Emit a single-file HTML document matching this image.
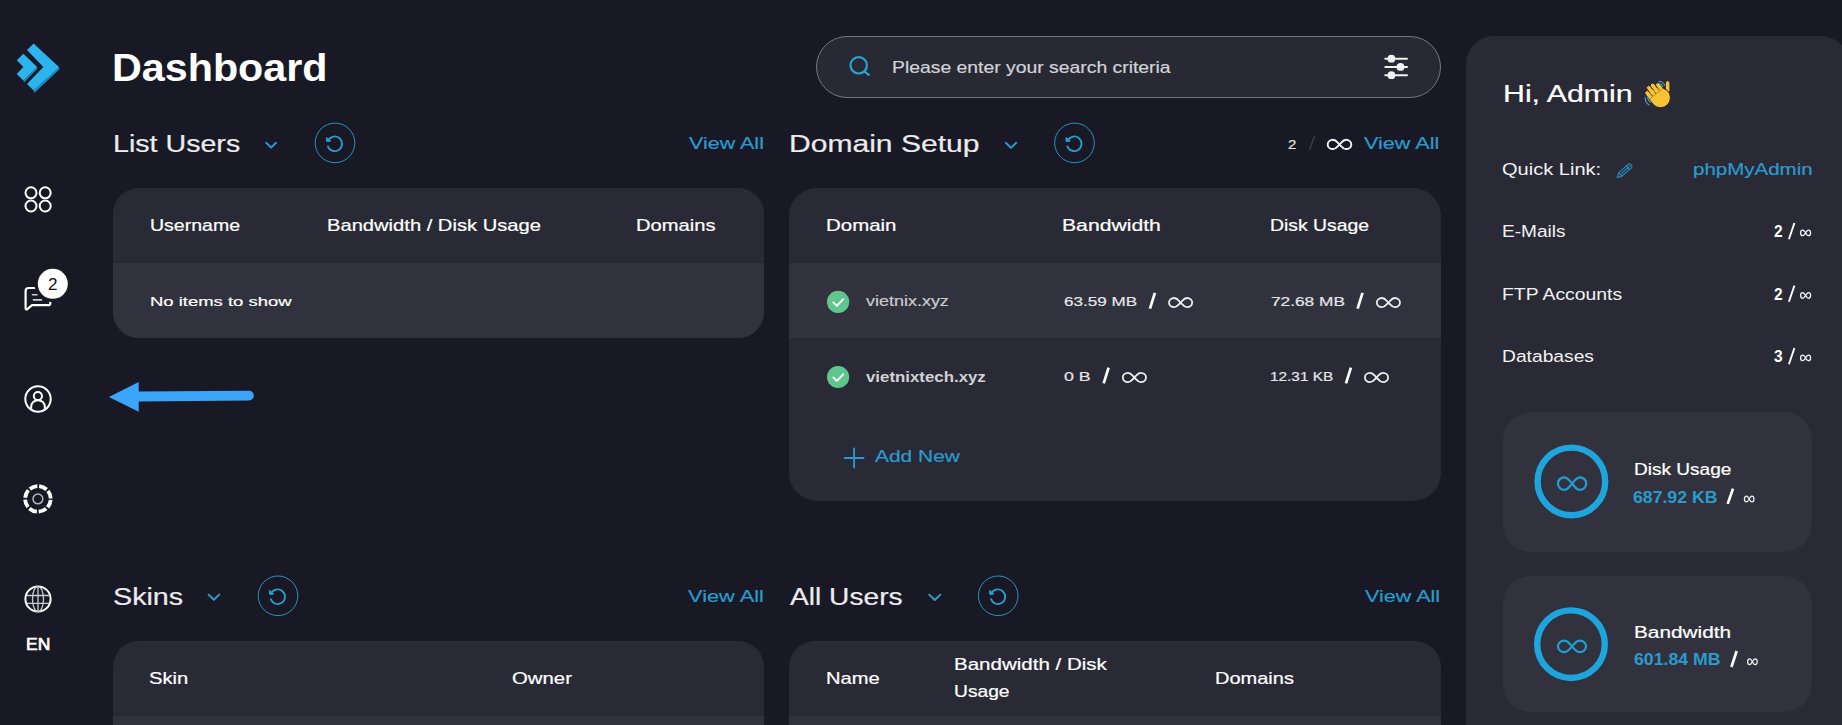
<!DOCTYPE html>
<html lang="en">
<head>
<meta charset="utf-8">
<title>Dashboard</title>
<style>
html,body{margin:0;padding:0;}
body{width:1842px;height:725px;overflow:hidden;background:#181924;position:relative;font-family:"Liberation Sans",sans-serif;}
.t{position:absolute;white-space:nowrap;line-height:normal;transform-origin:0 0;font-family:"Liberation Sans",sans-serif;}
.box{position:absolute;overflow:hidden;}
.box>i{position:absolute;left:0;right:0;display:block;}
#icons{position:absolute;left:0;top:0;width:1842px;height:725px;}
</style>
</head>
<body>
<!-- cards -->
<div class="box" style="left:113px;top:188px;width:651px;height:150px;border-radius:26px;background:#292a35;"><i style="top:73.4px;height:1.2px;background:#262732;"></i><i style="top:74.5px;height:75.5px;background:#31323d;"></i></div>
<div class="box" style="left:789px;top:188px;width:652px;height:312.6px;border-radius:28px;background:#292a35;"><i style="top:73.4px;height:1.2px;background:#262732;"></i><i style="top:74.5px;height:75.5px;background:#31323d;"></i></div>
<div class="box" style="left:113px;top:640.5px;width:651px;height:150px;border-radius:26px;background:#292a35;"><i style="top:74.2px;height:1.2px;background:#262732;"></i><i style="top:75.3px;height:76px;background:#31323d;"></i></div>
<div class="box" style="left:789px;top:640.5px;width:652px;height:150px;border-radius:26px;background:#292a35;"><i style="top:74.2px;height:1.2px;background:#262732;"></i><i style="top:75.3px;height:76px;background:#31323d;"></i></div>
<!-- search -->
<div class="box" style="left:816px;top:36px;width:623px;height:60px;border-radius:31px;background:#282934;border:1px solid #74767f;"></div>
<!-- right panel -->
<div class="box" style="left:1466px;top:36px;width:383px;height:760px;border-radius:28px;background:#292a35;"></div>
<div class="box" style="left:1503.4px;top:412.2px;width:309px;height:140.2px;border-radius:28px;background:#31323d;"></div>
<div class="box" style="left:1503.4px;top:575.9px;width:309px;height:136.1px;border-radius:28px;background:#31323d;"></div>

<svg id="icons" viewBox="0 0 1842 725" width="1842" height="725">
<!-- logo -->
<g>
<polygon points="59.2,67.2 59.2,69.6 34.6,92.8 33.6,90.4" fill="#1a8cc2"/>
<polygon points="33.6,43.5 59.2,67.2 33.6,90.4 27,84.1 43.3,67 27,50.1" fill="#2cb4ee"/>
<polygon points="37.1,66.9 37.1,69 24,82.6 23.4,80.6" fill="#1a8cc2"/>
<polygon points="23.4,53.7 37.1,66.9 23.4,80.6 16.8,74 23.4,67 16.8,60.3" fill="#2cb4ee"/>
</g>
<!-- grid -->
<g fill="none" stroke="#fff" stroke-width="2">
<circle cx="31" cy="192.8" r="5.5"/><circle cx="45.2" cy="192.8" r="5.5"/><circle cx="31" cy="206" r="5.5"/><circle cx="45.2" cy="206" r="5.5"/>
</g>
<!-- chat -->
<g fill="none" stroke="#fff" stroke-width="2.2" stroke-linejoin="round" stroke-linecap="round">
<path d="M50.3,300 V303.2 Q50.3,305.2 48.3,305.2 H32 L27.5,309 Q25.6,310.2 25.6,308 V291 Q25.6,288 28.6,288 H38"/>
<path d="M32.5,294.8 H37" stroke="#cfd0d5" stroke-width="1.6"/><path d="M33.4,299.9 H41.4" stroke="#cfd0d5" stroke-width="1.6"/>
</g>
<circle cx="52.8" cy="283.8" r="18.4" fill="#181924"/>
<circle cx="52.8" cy="283.8" r="15" fill="#fff"/>
<!-- user -->
<g fill="none" stroke="#fff" stroke-width="2">
<circle cx="38" cy="399" r="12.7"/>
<circle cx="37.9" cy="396" r="4.1"/>
<path d="M31.2,409.6 V406.5 A6.8,6.3 0 0 1 44.8,406.5 V409.6"/>
</g>
<!-- gear -->
<circle cx="37.9" cy="498.9" r="12.8" fill="none" stroke="#fff" stroke-width="3.8" stroke-dasharray="8.15 1.903" stroke-dashoffset="-0.95"/>
<circle cx="37.9" cy="498.9" r="4.9" fill="none" stroke="#b6b7be" stroke-width="1.5"/>
<!-- globe -->
<g fill="none" stroke="#fff">
<circle cx="38" cy="599" r="12.6" stroke-width="2"/>
<g stroke="#c9cad0" stroke-width="1.3">
<ellipse cx="38" cy="599" rx="5.5" ry="12.6"/>
<path d="M38,586.4 V611.6 M26.5,595.5 H49.5 M26.5,603.3 H49.5"/>
</g>
</g>
<!-- arrow -->
<path d="M108.9,397.1 L138.7,381.9 L138.7,391.6 L249,390.7 A4.9,4.9 0 0 1 249,400.5 L138.7,401.6 L138.7,411.7 Z" fill="#3ba5fa"/>
<!-- chevrons -->
<g fill="none" stroke="#2b9bcd" stroke-width="2" stroke-linecap="round" stroke-linejoin="round">
<polyline points="266.2,142.8 271.1,147.6 276,142.8"/>
<polyline points="1005.8,142.8 1011,147.9 1016.2,142.8"/>
<polyline points="208.6,594.6 213.9,599.8 219.2,594.6"/>
<polyline points="929.2,594.6 934.8,600 940.4,594.6"/>
</g>
<!-- refresh buttons -->

<g transform="translate(335,142.9)" fill="none" stroke="#2b9bcd">
<circle cx="0" cy="0" r="19.8" stroke-width="1" stroke-opacity="0.92"/>
<path d="M-6.86,-2.5 A7.3,7.3 0 1 1 -7.05,1.9" stroke-width="1.8" transform="translate(-0.3,0.9)"/>
<path d="M-8.6,-5.4 L-8.4,-1.4 L-4.2,-1.8 Z" fill="#2b9bcd" stroke-width="1" stroke-linejoin="round"/>
</g>
<g transform="translate(1074.5,142.9)" fill="none" stroke="#2b9bcd">
<circle cx="0" cy="0" r="19.8" stroke-width="1" stroke-opacity="0.92"/>
<path d="M-6.86,-2.5 A7.3,7.3 0 1 1 -7.05,1.9" stroke-width="1.8" transform="translate(-0.3,0.9)"/>
<path d="M-8.6,-5.4 L-8.4,-1.4 L-4.2,-1.8 Z" fill="#2b9bcd" stroke-width="1" stroke-linejoin="round"/>
</g>
<g transform="translate(278,595.8)" fill="none" stroke="#2b9bcd">
<circle cx="0" cy="0" r="19.8" stroke-width="1" stroke-opacity="0.92"/>
<path d="M-6.86,-2.5 A7.3,7.3 0 1 1 -7.05,1.9" stroke-width="1.8" transform="translate(-0.3,0.9)"/>
<path d="M-8.6,-5.4 L-8.4,-1.4 L-4.2,-1.8 Z" fill="#2b9bcd" stroke-width="1" stroke-linejoin="round"/>
</g>
<g transform="translate(998.2,595.8)" fill="none" stroke="#2b9bcd">
<circle cx="0" cy="0" r="19.8" stroke-width="1" stroke-opacity="0.92"/>
<path d="M-6.86,-2.5 A7.3,7.3 0 1 1 -7.05,1.9" stroke-width="1.8" transform="translate(-0.3,0.9)"/>
<path d="M-8.6,-5.4 L-8.4,-1.4 L-4.2,-1.8 Z" fill="#2b9bcd" stroke-width="1" stroke-linejoin="round"/>
</g>
<!-- search icon -->
<g fill="none" stroke="#2aa2d2" stroke-width="2.2" stroke-linecap="round">
<circle cx="858.7" cy="65.3" r="8.2"/><path d="M864.6,71.6 L868.8,74.8"/>
</g>
<!-- sliders -->
<g stroke="#f1f1f4" stroke-width="2" stroke-linecap="round">
<path d="M1385.3,58.7 H1407 M1385.3,66.9 H1407 M1385.3,75.2 H1407"/>
</g>
<g fill="#f1f1f4"><circle cx="1391.4" cy="58.7" r="3.9"/><circle cx="1400.5" cy="66.9" r="3.9"/><circle cx="1391.4" cy="75.2" r="3.9"/></g>
<!-- dim slash + header inf -->
<path d="M1309.4,150.2 L1314.6,136" stroke="#3c3e4a" stroke-width="1.4"/>
<!-- check circles -->
<g>
<circle cx="838.1" cy="301.9" r="11.1" fill="#5fc78d"/>
<polyline points="833.3,302.4 836.9,305.8 843.2,299.2" fill="none" stroke="#fff" stroke-width="1.9" stroke-linecap="round" stroke-linejoin="round"/>
<circle cx="838.1" cy="377" r="11.1" fill="#5fc78d"/>
<polyline points="833.3,377.5 836.9,380.9 843.2,374.3" fill="none" stroke="#fff" stroke-width="1.9" stroke-linecap="round" stroke-linejoin="round"/>
</g>
<!-- bold slashes -->
<g stroke="#fff" stroke-width="2.7">
<path d="M1150,308.7 L1154.9,292.8"/><path d="M1357.6,308.7 L1362.5,292.8"/>
<path d="M1103.7,383.4 L1108.6,367.7"/><path d="M1346,383.4 L1350.9,367.7"/>
<path d="M1727.7,503.9 L1733,488.6"/><path d="M1731.4,667 L1736.7,651"/>
</g>
<!-- thin slashes right panel -->
<g stroke="#fff" stroke-width="1.9">
<path d="M1788.9,239.2 L1794.4,223"/><path d="M1788.9,301.8 L1794.4,285.6"/><path d="M1788.9,364.2 L1794.4,348"/>
</g>
<!-- plus -->
<path d="M854.1,448.5 V467.6 M844.6,458 H863.6" stroke="#2b9bcd" stroke-width="1.8" stroke-linecap="round"/>
<!-- rings -->
<circle cx="1571.4" cy="481.4" r="33.8" fill="none" stroke="#1ea5de" stroke-width="6.4"/>
<circle cx="1571" cy="644.2" r="33.8" fill="none" stroke="#1ea5de" stroke-width="6.4"/>
<!-- pencil -->
<g fill="none" stroke="#2788b8" stroke-width="1.2" stroke-linejoin="round" stroke-linecap="round">
<path d="M1617.2,177.4 L1618.6,172.9 L1628.2,164.3 Q1629.6,163.2 1630.8,164.5 L1631.5,165.3 Q1632.6,166.7 1631.3,167.9 L1621.7,176.3 Z"/>
<path d="M1618.6,172.9 L1621.7,176.3 M1626.2,166.1 L1629.4,169.5 M1620.2,174.6 L1629.8,166"/>
</g>
<!-- wave emoji -->
<g transform="translate(1657.2,94.6)">
<g transform="rotate(-38)" stroke="#2a2520" stroke-width="0.9" stroke-linejoin="round">
<rect x="8.6" y="-6.5" width="4.6" height="12" rx="2.3" fill="#f7c235" transform="rotate(38 10.9 3)"/>
<rect x="-9.2" y="-9.8" width="4.5" height="14" rx="2.25" fill="#f7c235"/>
<rect x="-4.7" y="-12.8" width="4.5" height="16" rx="2.25" fill="#f7c235"/>
<rect x="-0.2" y="-12.4" width="4.5" height="16" rx="2.25" fill="#f7c235"/>
<rect x="4.3" y="-9.4" width="4.4" height="13" rx="2.2" fill="#f7c235"/>
<path d="M-9.2,-1 H8.7 L10.5,3 A9.6,9.6 0 0 1 -9.2,6 Z" fill="#f7c235"/>
<path d="M-8.7,-1.2 H8.2 V2 H-8.7 Z" fill="#f7c235" stroke="none"/>
<path d="M-4.7,-1 V-6 M-0.2,-1 V-7 M4.3,-1 V-5" stroke="#dba324" stroke-width="0.8" fill="none"/>
</g>
<path d="M-12,2.6 Q-12.4,7.4 -8.2,10.4 M-9.4,2.4 Q-9.6,5.6 -6.6,7.8" fill="none" stroke="#4c9fd0" stroke-width="1.1" stroke-linecap="round"/>
<path d="M1.6,-13.4 Q6,-13.2 7.6,-9.2 M2,-10.8 Q4.6,-10.6 5.6,-8.2" fill="none" stroke="#4c9fd0" stroke-width="1.1" stroke-linecap="round"/>
</g>
<path d="M1339.50,144.40 C1341.86,142.08 1343.04,139.75 1345.99,139.75 C1348.94,139.75 1351.30,141.84 1351.30,144.40 C1351.30,146.96 1348.94,149.05 1345.99,149.05 C1343.04,149.05 1341.86,146.72 1339.50,144.40 C1337.14,142.08 1335.96,139.75 1333.01,139.75 C1330.06,139.75 1327.70,141.84 1327.70,144.40 C1327.70,146.96 1330.06,149.05 1333.01,149.05 C1335.96,149.05 1337.14,146.72 1339.50,144.40Z" fill="none" stroke="#f4f4f6" stroke-width="1.9" stroke-linejoin="round"/>
<path d="M1180.60,302.60 C1182.92,300.30 1184.08,298.00 1186.98,298.00 C1189.88,298.00 1192.20,300.07 1192.20,302.60 C1192.20,305.13 1189.88,307.20 1186.98,307.20 C1184.08,307.20 1182.92,304.90 1180.60,302.60 C1178.28,300.30 1177.12,298.00 1174.22,298.00 C1171.32,298.00 1169.00,300.07 1169.00,302.60 C1169.00,305.13 1171.32,307.20 1174.22,307.20 C1177.12,307.20 1178.28,304.90 1180.60,302.60Z" fill="none" stroke="#f0f0f3" stroke-width="1.8" stroke-linejoin="round"/>
<path d="M1388.40,302.60 C1390.72,300.30 1391.88,298.00 1394.78,298.00 C1397.68,298.00 1400.00,300.07 1400.00,302.60 C1400.00,305.13 1397.68,307.20 1394.78,307.20 C1391.88,307.20 1390.72,304.90 1388.40,302.60 C1386.08,300.30 1384.92,298.00 1382.02,298.00 C1379.12,298.00 1376.80,300.07 1376.80,302.60 C1376.80,305.13 1379.12,307.20 1382.02,307.20 C1384.92,307.20 1386.08,304.90 1388.40,302.60Z" fill="none" stroke="#f0f0f3" stroke-width="1.8" stroke-linejoin="round"/>
<path d="M1134.40,377.50 C1136.72,375.20 1137.88,372.90 1140.78,372.90 C1143.68,372.90 1146.00,374.97 1146.00,377.50 C1146.00,380.03 1143.68,382.10 1140.78,382.10 C1137.88,382.10 1136.72,379.80 1134.40,377.50 C1132.08,375.20 1130.92,372.90 1128.02,372.90 C1125.12,372.90 1122.80,374.97 1122.80,377.50 C1122.80,380.03 1125.12,382.10 1128.02,382.10 C1130.92,382.10 1132.08,379.80 1134.40,377.50Z" fill="none" stroke="#f0f0f3" stroke-width="1.8" stroke-linejoin="round"/>
<path d="M1376.50,377.50 C1378.82,375.20 1379.98,372.90 1382.88,372.90 C1385.78,372.90 1388.10,374.97 1388.10,377.50 C1388.10,380.03 1385.78,382.10 1382.88,382.10 C1379.98,382.10 1378.82,379.80 1376.50,377.50 C1374.18,375.20 1373.02,372.90 1370.12,372.90 C1367.22,372.90 1364.90,374.97 1364.90,377.50 C1364.90,380.03 1367.22,382.10 1370.12,382.10 C1373.02,382.10 1374.18,379.80 1376.50,377.50Z" fill="none" stroke="#f0f0f3" stroke-width="1.8" stroke-linejoin="round"/>
<path d="M1572.10,483.60 C1574.93,480.45 1576.34,477.30 1579.88,477.30 C1583.42,477.30 1586.25,480.14 1586.25,483.60 C1586.25,487.06 1583.42,489.90 1579.88,489.90 C1576.34,489.90 1574.93,486.75 1572.10,483.60 C1569.27,480.45 1567.86,477.30 1564.32,477.30 C1560.78,477.30 1557.95,480.14 1557.95,483.60 C1557.95,487.06 1560.78,489.90 1564.32,489.90 C1567.86,489.90 1569.27,486.75 1572.10,483.60Z" fill="none" stroke="#1f9fd6" stroke-width="2.2" stroke-linejoin="round"/>
<path d="M1572.00,646.40 C1574.80,643.50 1576.20,640.60 1579.70,640.60 C1583.20,640.60 1586.00,643.21 1586.00,646.40 C1586.00,649.59 1583.20,652.20 1579.70,652.20 C1576.20,652.20 1574.80,649.30 1572.00,646.40 C1569.20,643.50 1567.80,640.60 1564.30,640.60 C1560.80,640.60 1558.00,643.21 1558.00,646.40 C1558.00,649.59 1560.80,652.20 1564.30,652.20 C1567.80,652.20 1569.20,649.30 1572.00,646.40Z" fill="none" stroke="#1f9fd6" stroke-width="2.2" stroke-linejoin="round"/>
<path d="M1805.60,232.90 C1806.61,231.51 1807.11,230.12 1808.36,230.12 C1809.62,230.12 1810.62,231.37 1810.62,232.90 C1810.62,234.43 1809.62,235.68 1808.36,235.68 C1807.11,235.68 1806.61,234.29 1805.60,232.90 C1804.59,231.51 1804.09,230.12 1802.84,230.12 C1801.58,230.12 1800.57,231.37 1800.57,232.90 C1800.57,234.43 1801.58,235.68 1802.84,235.68 C1804.09,235.68 1804.59,234.29 1805.60,232.90Z" fill="none" stroke="#f4f4f6" stroke-width="1.25" stroke-linejoin="round"/>
<path d="M1805.60,295.50 C1806.61,294.11 1807.11,292.73 1808.36,292.73 C1809.62,292.73 1810.62,293.97 1810.62,295.50 C1810.62,297.03 1809.62,298.27 1808.36,298.27 C1807.11,298.27 1806.61,296.89 1805.60,295.50 C1804.59,294.11 1804.09,292.73 1802.84,292.73 C1801.58,292.73 1800.57,293.97 1800.57,295.50 C1800.57,297.03 1801.58,298.27 1802.84,298.27 C1804.09,298.27 1804.59,296.89 1805.60,295.50Z" fill="none" stroke="#f4f4f6" stroke-width="1.25" stroke-linejoin="round"/>
<path d="M1805.60,357.90 C1806.61,356.51 1807.11,355.12 1808.36,355.12 C1809.62,355.12 1810.62,356.37 1810.62,357.90 C1810.62,359.43 1809.62,360.67 1808.36,360.67 C1807.11,360.67 1806.61,359.29 1805.60,357.90 C1804.59,356.51 1804.09,355.12 1802.84,355.12 C1801.58,355.12 1800.57,356.37 1800.57,357.90 C1800.57,359.43 1801.58,360.67 1802.84,360.67 C1804.09,360.67 1804.59,359.29 1805.60,357.90Z" fill="none" stroke="#f4f4f6" stroke-width="1.25" stroke-linejoin="round"/>
<path d="M1749.20,499.00 C1750.15,497.56 1750.63,496.12 1751.83,496.12 C1753.02,496.12 1753.98,497.42 1753.98,499.00 C1753.98,500.58 1753.02,501.88 1751.83,501.88 C1750.63,501.88 1750.15,500.44 1749.20,499.00 C1748.25,497.56 1747.77,496.12 1746.57,496.12 C1745.38,496.12 1744.42,497.42 1744.42,499.00 C1744.42,500.58 1745.38,501.88 1746.57,501.88 C1747.77,501.88 1748.25,500.44 1749.20,499.00Z" fill="none" stroke="#f4f4f6" stroke-width="1.25" stroke-linejoin="round"/>
<path d="M1752.40,661.70 C1753.36,660.26 1753.83,658.83 1755.03,658.83 C1756.22,658.83 1757.18,660.12 1757.18,661.70 C1757.18,663.28 1756.22,664.58 1755.03,664.58 C1753.83,664.58 1753.36,663.14 1752.40,661.70 C1751.45,660.26 1750.97,658.83 1749.77,658.83 C1748.58,658.83 1747.62,660.12 1747.62,661.70 C1747.62,663.28 1748.58,664.58 1749.77,664.58 C1750.97,664.58 1751.45,663.14 1752.40,661.70Z" fill="none" stroke="#f4f4f6" stroke-width="1.25" stroke-linejoin="round"/>
</svg>
<div class="t" style="left:112.22px;top:46.20px;font-size:38.9px;font-weight:700;color:#ffffff;transform:scaleX(1.0611);">Dashboard</div>
<div class="t" style="left:112.68px;top:130.00px;font-size:24.7px;font-weight:400;color:#ececef;transform:scaleX(1.1589);-webkit-text-stroke:0.2px #ececef;">List Users</div>
<div class="t" style="left:688.70px;top:134.20px;font-size:16.5px;font-weight:400;color:#2b9bcd;transform:scaleX(1.3035);-webkit-text-stroke:0.2px #2b9bcd;">View All</div>
<div class="t" style="left:788.76px;top:130.00px;font-size:24.7px;font-weight:400;color:#ececef;transform:scaleX(1.2175);-webkit-text-stroke:0.2px #ececef;">Domain Setup</div>
<div class="t" style="left:1287.50px;top:136.90px;font-size:13.1px;font-weight:400;color:#e4e4e8;transform:scaleX(1.1429);-webkit-text-stroke:0.2px #e4e4e8;">2</div>
<div class="t" style="left:1364.20px;top:133.90px;font-size:16.5px;font-weight:400;color:#2b9bcd;transform:scaleX(1.3105);-webkit-text-stroke:0.2px #2b9bcd;">View All</div>
<div class="t" style="left:150.35px;top:216.90px;font-size:15.7px;font-weight:400;color:#ffffff;transform:scaleX(1.2451);-webkit-text-stroke:0.2px #ffffff;">Username</div>
<div class="t" style="left:327.22px;top:216.90px;font-size:15.7px;font-weight:400;color:#ffffff;transform:scaleX(1.2842);-webkit-text-stroke:0.2px #ffffff;">Bandwidth / Disk Usage</div>
<div class="t" style="left:635.71px;top:216.90px;font-size:15.7px;font-weight:400;color:#ffffff;transform:scaleX(1.2852);-webkit-text-stroke:0.2px #ffffff;">Domains</div>
<div class="t" style="left:149.65px;top:294.20px;font-size:13.7px;font-weight:400;color:#ffffff;transform:scaleX(1.3481);-webkit-text-stroke:0.2px #ffffff;">No items to show</div>
<div class="t" style="left:826.30px;top:217.10px;font-size:15.7px;font-weight:400;color:#ffffff;transform:scaleX(1.3038);-webkit-text-stroke:0.2px #ffffff;">Domain</div>
<div class="t" style="left:1062.45px;top:217.10px;font-size:15.7px;font-weight:400;color:#ffffff;transform:scaleX(1.3486);-webkit-text-stroke:0.2px #ffffff;">Bandwidth</div>
<div class="t" style="left:1269.86px;top:217.10px;font-size:15.7px;font-weight:400;color:#ffffff;transform:scaleX(1.2354);-webkit-text-stroke:0.2px #ffffff;">Disk Usage</div>
<div class="t" style="left:866.30px;top:293.10px;font-size:14.5px;font-weight:400;color:#c9cace;transform:scaleX(1.2388);-webkit-text-stroke:0.2px #c9cace;">vietnix.xyz</div>
<div class="t" style="left:1063.90px;top:293.80px;font-size:13.7px;font-weight:400;color:#e6e6ea;transform:scaleX(1.2466);-webkit-text-stroke:0.2px #e6e6ea;">63.59 MB</div>
<div class="t" style="left:1270.80px;top:293.80px;font-size:13.7px;font-weight:400;color:#e6e6ea;transform:scaleX(1.2621);-webkit-text-stroke:0.2px #e6e6ea;">72.68 MB</div>
<div class="t" style="left:866.30px;top:368.70px;font-size:14.5px;font-weight:700;color:#d2d3d6;transform:scaleX(1.1612);">vietnixtech.xyz</div>
<div class="t" style="left:1063.90px;top:369.20px;font-size:13.7px;font-weight:400;color:#e6e6ea;transform:scaleX(1.3000);-webkit-text-stroke:0.2px #e6e6ea;">0 B</div>
<div class="t" style="left:1269.68px;top:369.20px;font-size:13.7px;font-weight:400;color:#e6e6ea;transform:scaleX(1.1218);-webkit-text-stroke:0.2px #e6e6ea;">12.31 KB</div>
<div class="t" style="left:875.00px;top:446.90px;font-size:16.5px;font-weight:400;color:#2b9bcd;transform:scaleX(1.2687);-webkit-text-stroke:0.2px #2b9bcd;">Add New</div>
<div class="t" style="left:1502.86px;top:79.80px;font-size:24.8px;font-weight:400;color:#ffffff;transform:scaleX(1.2223);-webkit-text-stroke:0.2px #ffffff;">Hi, Admin</div>
<div class="t" style="left:1502.20px;top:160.00px;font-size:16.7px;font-weight:401;color:#f2f2f4;transform:scaleX(1.2012);">Quick Link:</div>
<div class="t" style="left:1692.56px;top:160.00px;font-size:16.5px;font-weight:400;color:#2b9bcd;transform:scaleX(1.2426);-webkit-text-stroke:0.2px #2b9bcd;">phpMyAdmin</div>
<div class="t" style="left:1502.46px;top:222.20px;font-size:16.7px;font-weight:401;color:#f2f2f4;transform:scaleX(1.1426);">E-Mails</div>
<div class="t" style="left:1502.44px;top:284.80px;font-size:16.7px;font-weight:401;color:#f2f2f4;transform:scaleX(1.1598);">FTP Accounts</div>
<div class="t" style="left:1502.45px;top:347.20px;font-size:16.7px;font-weight:401;color:#f2f2f4;transform:scaleX(1.1526);">Databases</div>
<div class="t" style="left:1773.80px;top:222.20px;font-size:16.2px;font-weight:700;color:#ffffff;transform:scaleX(0.9556);">2</div>
<div class="t" style="left:1773.80px;top:284.80px;font-size:16.2px;font-weight:700;color:#ffffff;transform:scaleX(0.9556);">2</div>
<div class="t" style="left:1773.80px;top:347.20px;font-size:16.2px;font-weight:700;color:#ffffff;transform:scaleX(0.9556);">3</div>
<div class="t" style="left:1634.01px;top:461.00px;font-size:16px;font-weight:400;color:#ffffff;transform:scaleX(1.1901);-webkit-text-stroke:0.2px #ffffff;">Disk Usage</div>
<div class="t" style="left:1633.24px;top:487.50px;font-size:16.6px;font-weight:700;color:#2b9bcd;transform:scaleX(1.0641);">687.92 KB</div>
<div class="t" style="left:1634.10px;top:624.00px;font-size:16px;font-weight:400;color:#ffffff;transform:scaleX(1.3000);-webkit-text-stroke:0.2px #ffffff;">Bandwidth</div>
<div class="t" style="left:1633.63px;top:650.10px;font-size:16.6px;font-weight:700;color:#2b9bcd;transform:scaleX(1.0662);">601.84 MB</div>
<div class="t" style="left:112.54px;top:583.00px;font-size:24.7px;font-weight:400;color:#ececef;transform:scaleX(1.1627);-webkit-text-stroke:0.2px #ececef;">Skins</div>
<div class="t" style="left:688.00px;top:587.00px;font-size:16.5px;font-weight:400;color:#2b9bcd;transform:scaleX(1.3211);-webkit-text-stroke:0.2px #2b9bcd;">View All</div>
<div class="t" style="left:149.31px;top:670.40px;font-size:15.7px;font-weight:400;color:#ffffff;transform:scaleX(1.2862);-webkit-text-stroke:0.2px #ffffff;">Skin</div>
<div class="t" style="left:511.70px;top:670.40px;font-size:15.7px;font-weight:400;color:#ffffff;transform:scaleX(1.2978);-webkit-text-stroke:0.2px #ffffff;">Owner</div>
<div class="t" style="left:790.00px;top:583.00px;font-size:24.7px;font-weight:400;color:#ececef;transform:scaleX(1.1408);-webkit-text-stroke:0.2px #ececef;">All Users</div>
<div class="t" style="left:1365.10px;top:587.00px;font-size:16.5px;font-weight:400;color:#2b9bcd;transform:scaleX(1.3070);-webkit-text-stroke:0.2px #2b9bcd;">View All</div>
<div class="t" style="left:826.02px;top:670.40px;font-size:15.7px;font-weight:400;color:#ffffff;transform:scaleX(1.2825);-webkit-text-stroke:0.2px #ffffff;">Name</div>
<div class="t" style="left:953.69px;top:656.00px;font-size:15.7px;font-weight:400;color:#ffffff;transform:scaleX(1.3078);-webkit-text-stroke:0.2px #ffffff;">Bandwidth / Disk</div>
<div class="t" style="left:953.77px;top:682.60px;font-size:15.7px;font-weight:400;color:#ffffff;transform:scaleX(1.2250);-webkit-text-stroke:0.2px #ffffff;">Usage</div>
<div class="t" style="left:1214.72px;top:670.40px;font-size:15.7px;font-weight:400;color:#ffffff;transform:scaleX(1.2754);-webkit-text-stroke:0.2px #ffffff;">Domains</div>
<div class="t" style="left:891.92px;top:57.70px;font-size:16.4px;font-weight:400;color:#d2d3d7;transform:scaleX(1.1809);-webkit-text-stroke:0.2px #d2d3d7;">Please enter your search criteria</div>
<div class="t" style="left:26.29px;top:635.80px;font-size:15.8px;font-weight:401;color:#ffffff;transform:scaleX(1.1050);-webkit-text-stroke:0.65px #ffffff;">EN</div>
<div class="t" style="left:47.86px;top:274.80px;font-size:16.5px;font-weight:400;color:#111;transform:scaleX(1.0375);">2</div>
</body>
</html>
